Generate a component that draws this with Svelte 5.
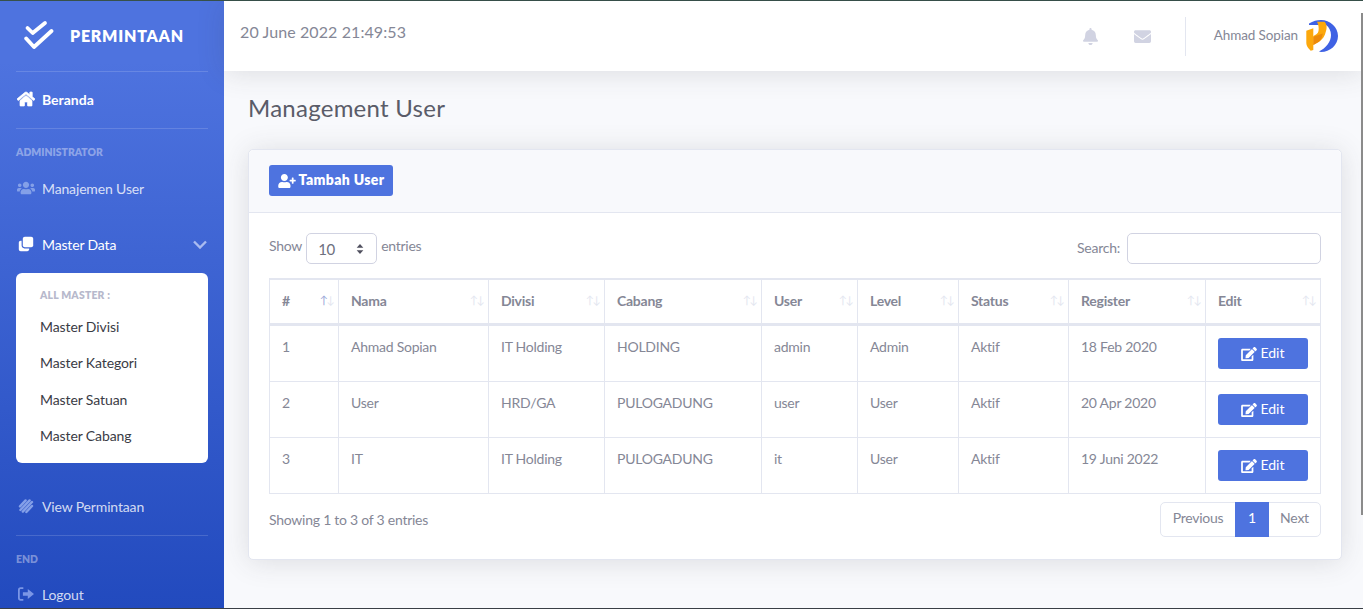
<script>
	const users = [
		{ no: 1, nama: 'Ahmad Sopian', divisi: 'IT Holding', cabang: 'HOLDING', user: 'admin', level: 'Admin', status: 'Aktif', register: '18 Feb 2020' },
		{ no: 2, nama: 'User', divisi: 'HRD/GA', cabang: 'PULOGADUNG', user: 'user', level: 'User', status: 'Aktif', register: '20 Apr 2020' },
		{ no: 3, nama: 'IT', divisi: 'IT Holding', cabang: 'PULOGADUNG', user: 'it', level: 'User', status: 'Aktif', register: '19 Juni 2022' }
	];

	const columns = [
		{ label: '#', width: 69 },
		{ label: 'Nama', width: 150 },
		{ label: 'Divisi', width: 116 },
		{ label: 'Cabang', width: 157 },
		{ label: 'User', width: 96 },
		{ label: 'Level', width: 101 },
		{ label: 'Status', width: 110 },
		{ label: 'Register', width: 137 },
		{ label: 'Edit', width: 115 }
	];

	const masters = ['Master Divisi', 'Master Kategori', 'Master Satuan', 'Master Cabang'];
</script>

<div class="page">
	<aside class="sidebar">
		<div class="brand">
			<svg class="brand-icon" viewBox="0 0 30 30" fill="none" stroke="#fff" stroke-width="3.800" stroke-linecap="round" stroke-linejoin="round">
				<path d="M3.500 8l5.200 5L21 3" />
				<path d="M2.200 18.500L10 27 27.500 11" />
			</svg>
			<span>PERMINTAAN</span>
		</div>
		<hr />
		<a class="nav active">
			<svg viewBox="0 0 576 512" fill="#fff" stroke="#fff" stroke-width="22" stroke-linejoin="round"><path d="M280.370 148.260L96 300.110V464a16 16 0 0 0 16 16l112.060-.290a16 16 0 0 0 15.920-16V368a16 16 0 0 1 16-16h64a16 16 0 0 1 16 16v95.640a16 16 0 0 0 16 16.050L464 480a16 16 0 0 0 16-16V300L295.670 148.260a12.190 12.190 0 0 0-15.300 0zM571.600 251.470L488 182.560V44.050a12 12 0 0 0-12-12h-56a12 12 0 0 0-12 12v72.610L318.470 43a48 48 0 0 0-61 0L4.340 251.470a12 12 0 0 0-1.600 16.900l25.500 31A12 12 0 0 0 45.150 301l235.220-193.740a12.190 12.190 0 0 1 15.300 0L530.900 301a12 12 0 0 0 16.900-1.600l25.500-31a12 12 0 0 0-1.700-16.930z" /></svg>
			<span>Beranda</span>
		</a>
		<hr />
		<div class="heading">ADMINISTRATOR</div>
		<a class="nav dim">
			<svg viewBox="0 0 640 512" fill="#84a0e8"><path d="M96 224c35.300 0 64-28.700 64-64s-28.700-64-64-64-64 28.700-64 64 28.700 64 64 64zm448 0c35.300 0 64-28.700 64-64s-28.700-64-64-64-64 28.700-64 64 28.700 64 64 64zm32 32h-64c-17.600 0-33.500 7.100-45.100 18.600 40.300 22.100 68.900 62 75.100 109.400h66c17.700 0 32-14.300 32-32v-32c0-35.300-28.700-64-64-64zm-256 0c61.900 0 112-50.100 112-112S381.900 32 320 32 208 82.100 208 144s50.100 112 112 112zm76.800 32h-8.300c-20.800 10-43.900 16-68.500 16s-47.600-6-68.500-16h-8.300C179.600 288 128 339.600 128 403.200V432c0 26.500 21.500 48 48 48h288c26.500 0 48-21.500 48-48v-28.800c0-63.600-51.600-115.200-115.200-115.200zm-223.700-13.400C161.500 263.100 145.600 256 128 256H64c-35.300 0-64 28.700-64 64v32c0 17.700 14.300 32 32 32h65.900c6.300-47.400 34.900-87.300 75.200-109.400z" /></svg>
			<span>Manajemen User</span>
		</a>
		<a class="nav open">
			<svg viewBox="0 0 20 20" fill="#fff"><rect x="6" y="1" width="13" height="13" rx="2.500" /><path d="M1 8.500C1 7 2 6 3.500 6H4.500V12c0 2 1.500 3.500 3.500 3.500H14v.800C14 18 13 19 11.500 19H3.500C2 19 1 18 1 16.500z" /></svg>
			<span>Master Data</span>
			<svg class="chevron" viewBox="0 0 14 9" fill="none" stroke="#a9bbf0" stroke-width="2.400"><path d="M1 1.500l6 6 6-6" /></svg>
		</a>
		<div class="submenu">
			<div class="sub-heading">ALL MASTER :</div>
			{#each masters as m}
				<a class="sub-item">{m}</a>
			{/each}
		</div>
		<a class="nav dim view">
			<svg viewBox="0 0 20 20" fill="none" stroke="#84a0e8" stroke-width="3" stroke-linecap="round"><path d="M2.500 10.500L9.500 3M3 15L14.500 3M6 17L17.500 5M10.500 17.500l7-7.500" /></svg>
			<span>View Permintaan</span>
		</a>
		<hr />
		<div class="heading">END</div>
		<a class="nav dim logout">
			<svg viewBox="0 0 20 18" fill="#7b96e6"><path d="M7 1.500H4C2 1.500 1 2.500 1 4.500v9c0 2 1 3 3 3h3v-2H4c-.600 0-1-.400-1-1v-9c0-.600.400-1 1-1h3z" /><path d="M12 3.500L19 9l-7 5.500V11H6.500V7H12z" /></svg>
			<span>Logout</span>
		</a>
	</aside>

	<div class="main">
		<header class="topbar">
			<div class="clock">20 June 2022 21:49:53</div>
			<div class="top-right">
				<svg class="top-icon" viewBox="0 0 448 512" fill="#d1d3e2"><path d="M224 512c35.320 0 63.970-28.650 63.970-64H160.030c0 35.350 28.650 64 63.970 64zm215.390-149.710c-19.320-20.760-55.470-51.990-55.470-154.290 0-77.700-54.480-139.900-127.940-155.160V32c0-17.670-14.320-32-31.980-32s-31.980 14.330-31.980 32v20.840C118.560 68.100 64.080 130.300 64.080 208c0 102.300-36.150 133.530-55.470 154.290-6 6.450-8.660 14.160-8.610 21.710.11 16.400 12.980 32 32.100 32h383.800c19.120 0 32-15.600 32.100-32 .05-7.550-2.610-15.270-8.610-21.710z" /></svg>
				<svg class="top-icon mail" viewBox="0 64 512 384" fill="#d1d3e2"><path d="M502.300 190.800c3.900-3.100 9.700-.2 9.700 4.700V400c0 26.500-21.500 48-48 48H48c-26.500 0-48-21.500-48-48V195.600c0-5 5.700-7.800 9.700-4.700 22.400 17.400 52.100 39.500 154.100 113.600 21.100 15.400 56.700 47.800 92.200 47.600 35.700.3 72-32.800 92.300-47.600 102-74.100 131.600-96.300 154-113.700zM256 320c23.200.4 56.600-29.200 73.400-41.400 132.700-96.300 142.800-104.700 173.400-128.700 5.800-4.500 9.200-11.500 9.200-18.900v-19c0-26.500-21.500-48-48-48H48C21.500 64 0 85.500 0 112v19c0 7.400 3.400 14.300 9.200 18.900 30.600 23.900 40.700 32.400 173.400 128.700 16.800 12.200 50.200 41.800 73.400 41.400z" /></svg>
				<div class="divider"></div>
				<span class="who">Ahmad Sopian</span>
				<svg class="avatar" viewBox="0 0 32 32">
					<path d="M3 3.500C7 1 11 0 15 0c9 0 17 7 17 16s-8 16-17 16l-2-.5c7-3.500 12-9.500 12-16.500 0-4-2-8-5-10H3z" fill="#3f62e4" />
					<path d="M.3 10.700L7.300 8.300V30l-2.600.7C2 28 .3 26 .3 23z" fill="#fca80c" />
					<path d="M11 1.700h7.500C21 4 21 8 20 11c-1 5-3.500 8.500-7 10.700L7.300 25v-9c2.700-1.500 4.700-2.500 5.200-5 .5-3 0-6.500-1.500-9.300z" fill="#fca80c" />
					<path d="M7.300 16.700L16.800 13.500c-.5 3.500-1.800 6.500-3.800 8.200L7.300 25z" fill="#ec8a0a" />
				</svg>
			</div>
		</header>

		<main class="content">
			<h1>Management User</h1>
			<section class="card">
				<div class="card-head">
					<button class="btn add">
						<svg viewBox="0 0 640 512" fill="#fff"><path d="M624 208h-64v-64c0-8.800-7.200-16-16-16h-32c-8.800 0-16 7.200-16 16v64h-64c-8.800 0-16 7.200-16 16v32c0 8.800 7.200 16 16 16h64v64c0 8.800 7.200 16 16 16h32c8.800 0 16-7.200 16-16v-64h64c8.800 0 16-7.200 16-16v-32c0-8.800-7.200-16-16-16zm-400 48c70.700 0 128-57.300 128-128S294.700 0 224 0 96 57.300 96 128s57.300 128 128 128zm89.600 32h-16.700c-22.200 10.200-46.900 16-72.900 16s-50.600-5.800-72.900-16h-16.700C60.200 288 0 348.200 0 422.400V464c0 26.500 21.500 48 48 48h352c26.500 0 48-21.500 48-48v-41.600c0-74.200-60.200-134.400-134.400-134.400z" /></svg>
						<span>Tambah User</span>
					</button>
				</div>
				<div class="card-body">
					<div class="controls">
						<div class="length">
							<span>Show</span>
							<div class="select">
								<span>10</span>
								<svg viewBox="0 0 8 12" fill="#50505f"><path d="M4 0l4 4.500H0zM4 12L0 7.500h8z" /></svg>
							</div>
							<span>entries</span>
						</div>
						<div class="search">
							<span>Search:</span>
							<div class="search-box"></div>
						</div>
					</div>

					<div class="users">
						<div class="row head">
							{#each columns as c, i}
								<div class="cell" style="width: {c.width}px">
									<span>{c.label}</span>
									<i class="sort" class:asc={i === 0}><b>↑</b><b>↓</b></i>
								</div>
							{/each}
						</div>
						{#each users as u}
							<div class="row">
								<div class="cell" style="width: {columns[0].width}px">{u.no}</div>
								<div class="cell" style="width: {columns[1].width}px">{u.nama}</div>
								<div class="cell" style="width: {columns[2].width}px">{u.divisi}</div>
								<div class="cell" style="width: {columns[3].width}px">{u.cabang}</div>
								<div class="cell" style="width: {columns[4].width}px">{u.user}</div>
								<div class="cell" style="width: {columns[5].width}px">{u.level}</div>
								<div class="cell" style="width: {columns[6].width}px">{u.status}</div>
								<div class="cell" style="width: {columns[7].width}px">{u.register}</div>
								<div class="cell action" style="width: {columns[8].width}px">
									<button class="btn edit">
										<svg viewBox="0 0 576 512" fill="#fff"><path d="M402.600 83.200l90.200 90.200c3.800 3.800 3.800 10 0 13.800L274.400 405.600l-92.800 10.300c-12.400 1.400-22.900-9.100-21.500-21.500l10.300-92.800L388.800 83.200c3.800-3.800 10-3.800 13.800 0zm162-22.900l-48.800-48.800c-15.200-15.200-39.900-15.200-55.200 0l-35.400 35.400c-3.800 3.800-3.800 10 0 13.800l90.200 90.200c3.800 3.800 10 3.800 13.800 0l35.400-35.400c15.200-15.300 15.200-40 0-55.200zM384 346.200V448H64V128h229.800c3.200 0 6.200-1.300 8.500-3.500l40-40c7.600-7.600 2.200-20.500-8.500-20.500H48C21.500 64 0 85.500 0 112v352c0 26.500 21.500 48 48 48h352c26.500 0 48-21.500 48-48V306.200c0-10.700-12.900-16-20.500-8.500l-40 40c-2.200 2.300-3.500 5.300-3.500 8.500z" /></svg>
										<span>Edit</span>
									</button>
								</div>
							</div>
						{/each}
					</div>

					<div class="foot">
						<span>Showing 1 to 3 of 3 entries</span>
						<div class="pager">
							<span class="page-link prev">Previous</span>
							<span class="page-link current">1</span>
							<span class="page-link next">Next</span>
						</div>
					</div>
				</div>
			</section>
		</main>
	</div>
	<div class="scrollbar"></div>
</div>

<style>
	:global(body) {
		margin: 0;
		overflow: hidden;
		font-family: "Lato", "Open Sans", sans-serif;
	}
	.page {
		display: flex;
		height: 609px;
		box-sizing: border-box;
		background: #f8f9fc;
		border-top: 1px solid #37514a;
		border-bottom: 1px solid #3a3f46;
		position: relative;
	}
	.sidebar {
		width: 224px;
		flex: none;
		box-sizing: border-box;
		padding: 0 16px;
		background: linear-gradient(180deg, #4e73df 10%, #224abe 100%);
		overflow: hidden;
	}
	.brand {
		display: flex;
		align-items: center;
		height: 70px;
		box-sizing: border-box;
		padding: 0 0 2px 8px;
		gap: 16px;
		color: #fff;
		font-weight: 800;
		font-size: 16px;
		letter-spacing: 0.75px;
	}
	.brand-icon {
		width: 30px;
		height: 30px;
	}
	hr {
		margin: 0;
		border: 0;
		border-top: 1px solid rgba(255, 255, 255, 0.15);
	}
	.nav {
		display: flex;
		align-items: center;
		height: 56px;
		padding-bottom: 2px;
		gap: 7px;
		font-size: 14px;
		letter-spacing: -0.15px;
		color: #fff;
		box-sizing: border-box;
	}
	.nav svg {
		width: 18px;
		height: 16px;
		margin-left: 1px;
		flex: none;
	}
	.nav.active {
		font-weight: 700;
		letter-spacing: 0;
	}
	.nav.dim {
		color: rgba(255, 255, 255, 0.8);
	}
	.nav svg.chevron {
		width: 14px;
		height: 9px;
		margin-left: auto;
		margin-right: 1px;
	}
	.heading {
		font-size: 10.400px;
		font-weight: 800;
		color: rgba(255, 255, 255, 0.4);
		padding-top: 17px;
		line-height: 12px;
	}
	.heading + .nav {
		height: 62px;
	}
	.nav.open {
		height: 50px;
	}
	.submenu {
		background: #fff;
		border-radius: 6px;
		padding: 16px 0 8px;
		height: 190px;
		box-sizing: border-box;
		margin-top: 3px;
	}
	.sub-heading {
		padding-left: 24px;
		font-size: 10.400px;
		letter-spacing: 0.2px;
		font-weight: 800;
		color: #b7b9cc;
		line-height: 12px;
		margin-bottom: 8px;
	}
	.sub-item {
		display: block;
		padding-left: 24px;
		font-size: 14px;
		letter-spacing: -0.1px;
		line-height: 36.300px;
		color: #3a3b45;
	}
	.nav.view {
		margin-top: 16px;
	}
	.heading + .nav.logout {
		height: 60px;
	}

	.main {
		flex: 1;
		min-width: 0;
	}
	.topbar {
		display: flex;
		justify-content: space-between;
		height: 70px;
		background: #fff;
		box-shadow: 0 2px 28px rgba(58, 59, 69, 0.15);
		padding: 0 25px 0 16px;
		position: relative;
	}
	.clock {
		font-size: 16px;
		letter-spacing: 0.1px;
		color: #858796;
		padding-top: 21px;
	}
	.top-right {
		display: flex;
		align-items: center;
	}
	.top-icon {
		width: 15px;
		height: 17px;
		margin-right: 36px;
	}
	.top-icon.mail {
		width: 17px;
		height: 13px;
		margin-right: 34px;
	}
	.divider {
		width: 1px;
		height: 39px;
		background: #e3e6f0;
		margin-right: 28px;
	}
	.who {
		font-size: 13.500px;
		letter-spacing: -0.1px;
		color: #858796;
		margin: -2px 8px 0 0;
	}
	.avatar {
		width: 32px;
		height: 32px;
	}
	.content {
		padding: 0 21px 0 24px;
	}
	h1 {
		margin: 0;
		padding-top: 22px;
		height: 56px;
		font-size: 24px;
		font-weight: 400;
		letter-spacing: 0.25px;
		line-height: 29px;
		color: #5a5c69;
	}
	.card {
		background: #fff;
		border: 1px solid #e3e6f0;
		border-radius: 5px;
		box-shadow: 0 2px 28px rgba(58, 59, 69, 0.15);
	}
	.card-head {
		background: #f8f9fc;
		border-bottom: 1px solid #e3e6f0;
		padding: 15px 20px;
		height: 63px;
		box-sizing: border-box;
		border-radius: 5px 5px 0 0;
	}
	.btn {
		display: inline-flex;
		align-items: center;
		justify-content: center;
		border: 0;
		border-radius: 3px;
		background: #4e73df;
		color: #fff;
		font-family: inherit;
		padding: 0;
	}
	.btn span {
		margin-top: -2px;
	}
	.btn.add {
		width: 124px;
		height: 31px;
		gap: 3px;
		font-size: 14px;
		font-weight: 800;
		letter-spacing: 0.35px;
	}
	.btn.add svg {
		width: 18px;
		height: 14px;
	}
	.card-body {
		padding: 20px 20px 22px;
		font-size: 14px;
		letter-spacing: -0.25px;
		color: #858796;
	}
	.controls {
		display: flex;
		justify-content: space-between;
		height: 45px;
	}
	.length {
		display: flex;
		gap: 4px;
		align-items: flex-start;
		line-height: 26px;
	}
	.select {
		display: flex;
		align-items: center;
		justify-content: space-between;
		width: 71px;
		height: 31px;
		box-sizing: border-box;
		border: 1px solid #d1d3e2;
		border-radius: 5px;
		padding: 0 12px 0 11px;
		color: #6e707e;
		font-size: 15px;
	}
	.select svg {
		width: 8px;
		height: 10px;
	}
	.search {
		display: flex;
		gap: 7px;
		line-height: 29px;
	}
	.search-box {
		width: 192px;
		height: 29px;
		border: 1px solid #d1d3e2;
		border-radius: 5px;
	}
	.users {
		border-left: 1px solid #e3e6f0;
		border-top: 2px solid #e3e6f0;
	}
	.row {
		display: flex;
		height: 56px;
		border-bottom: 1px solid #e3e6f0;
		box-sizing: border-box;
	}
	.row.head {
		height: 46px;
		border-bottom-width: 3px;
		font-weight: 700;
	}
	.cell {
		flex: none;
		box-sizing: border-box;
		border-right: 1px solid #e3e6f0;
		padding: 10px 12px 0;
		line-height: 21px;
		position: relative;
	}
	.head .cell {
		padding-top: 10px;
	}
	.sort {
		position: absolute;
		right: 5px;
		top: 12px;
		font-style: normal;
		font-weight: 400;
		font-size: 11px;
		letter-spacing: -1.5px;
		line-height: 16px;
		color: #e3e6f0;
	}
	.sort b {
		font-weight: 400;
	}
	.sort.asc b:first-child {
		color: #9aa8d8;
	}
	.action {
		padding-top: 12px;
	}
	.btn.edit {
		width: 90px;
		height: 31px;
		gap: 3px;
		font-size: 14px;
		letter-spacing: 0;
	}
	.btn.edit svg {
		width: 16px;
		height: 14px;
	}
	.foot {
		display: flex;
		justify-content: space-between;
		align-items: flex-start;
		margin-top: 8px;
	}
	.foot > span {
		padding-top: 8px;
		line-height: 20px;
	}
	.pager {
		display: flex;
		height: 35px;
		box-sizing: border-box;
		border: 1px solid #e3e6f0;
		border-radius: 5px;
		line-height: 29px;
	}
	.page-link {
		box-sizing: border-box;
		text-align: center;
	}
	.page-link.prev {
		width: 74px;
	}
	.page-link.current {
		background: #4e73df;
		color: #fff;
		width: 34px;
		margin: -1px 0;
		height: 35px;
		line-height: 31px;
	}
	.page-link.next {
		width: 51px;
	}
	.scrollbar {
		position: absolute;
		right: 0;
		top: 12px;
		width: 2px;
		height: 502px;
		background: #8b8b8b;
	}
</style>
